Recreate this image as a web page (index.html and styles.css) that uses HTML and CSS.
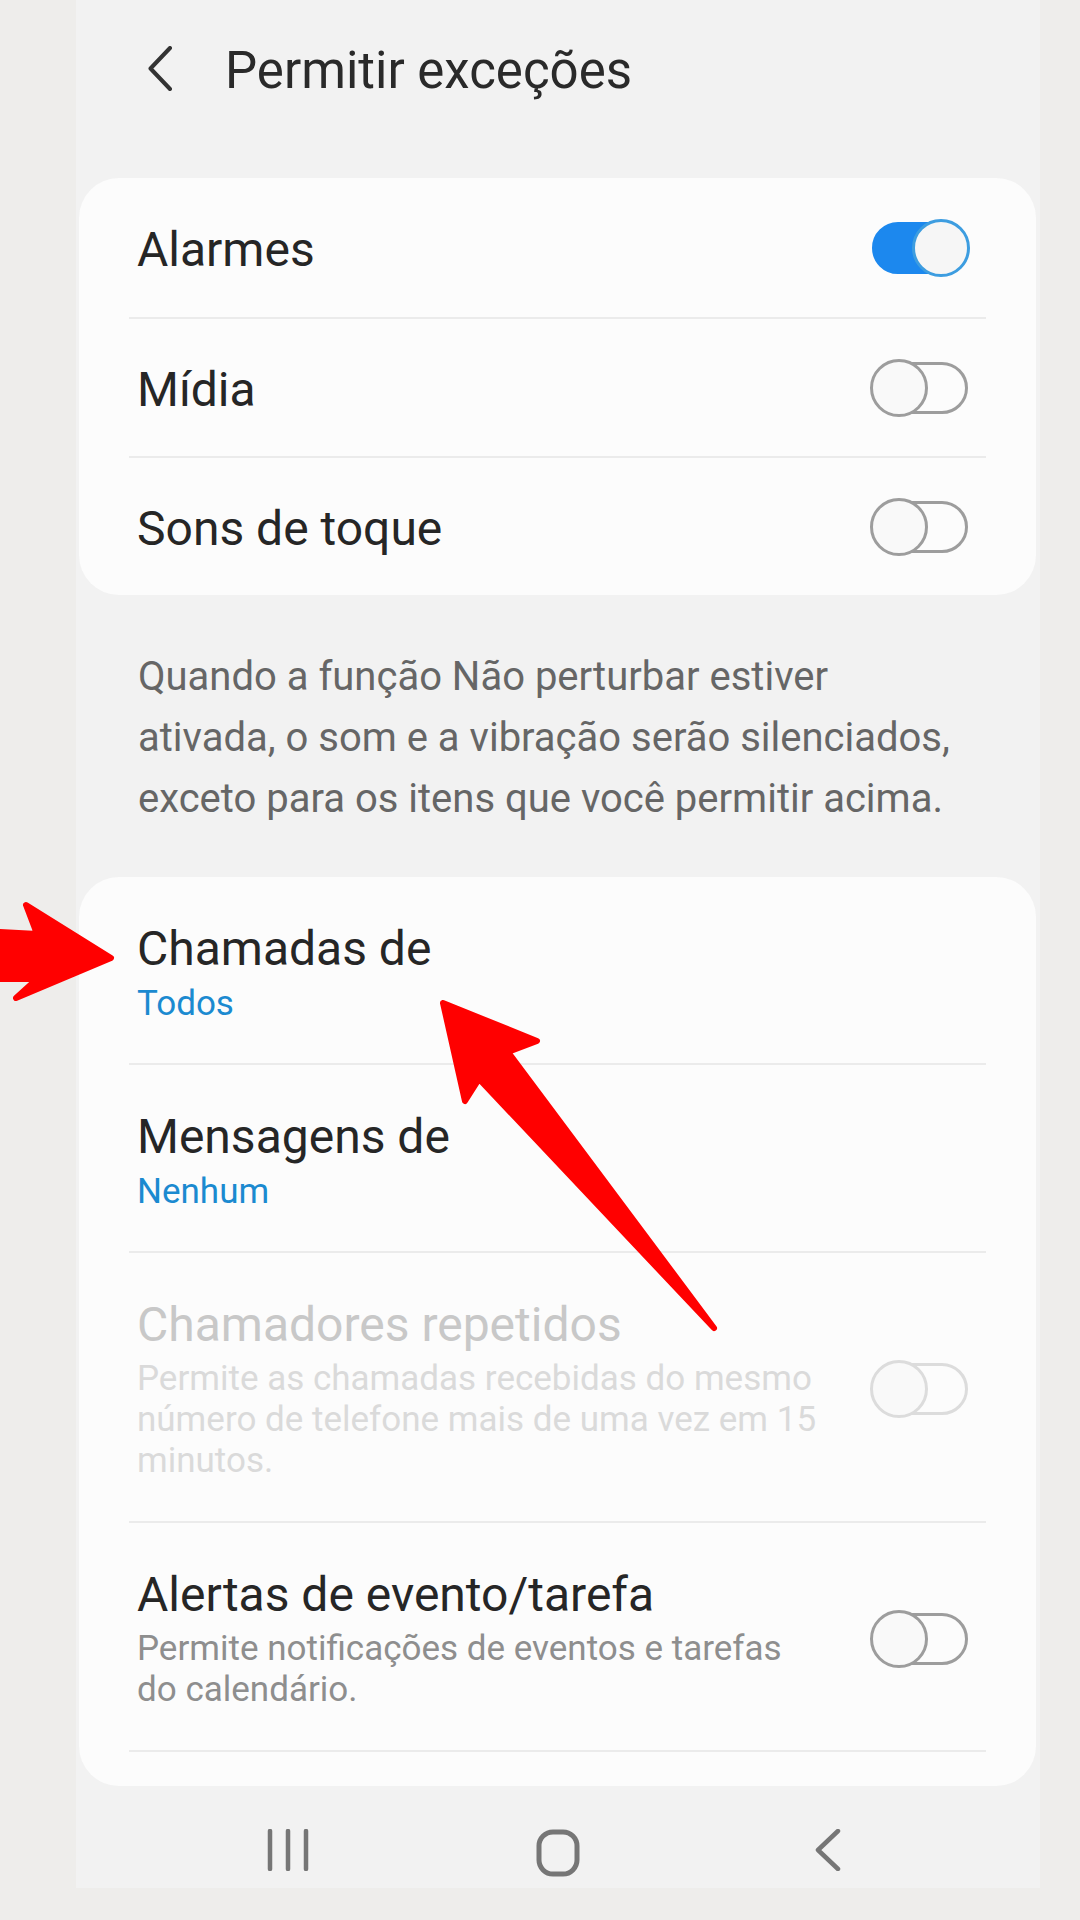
FILE: index.html
```html
<!DOCTYPE html>
<html lang="pt">
<head>
<meta charset="utf-8">
<title>Permitir exceções</title>
<link rel="stylesheet" href="styles.css">
</head>
<body>
<div class="screen">
  <header class="appbar">
    <svg class="back" width="26" height="45" viewBox="0 0 26 45"><path d="M23 2 L3.5 22.5 L23 43" fill="none" stroke="#333" stroke-width="4" stroke-linecap="round" stroke-linejoin="round"/></svg>
    <h1 class="appbar-title">Permitir exceções</h1>
  </header>

  <section class="card">
    <div class="row">
      <span class="label">Alarmes</span>
      <span class="toggle on"><span class="track"></span><span class="thumb"></span></span>
    </div>
    <div class="row">
      <span class="label">Mídia</span>
      <span class="toggle"><span class="track"></span><span class="thumb"></span></span>
    </div>
    <div class="row">
      <span class="label">Sons de toque</span>
      <span class="toggle"><span class="track"></span><span class="thumb"></span></span>
    </div>
  </section>

  <p class="note">Quando a função Não perturbar estiver<br>ativada, o som e a vibração serão silenciados,<br>exceto para os itens que você permitir acima.</p>

  <section class="card list">
    <div class="item">
      <div class="text">
        <div class="title">Chamadas de</div>
        <div class="value">Todos</div>
      </div>
    </div>
    <div class="item">
      <div class="text">
        <div class="title">Mensagens de</div>
        <div class="value">Nenhum</div>
      </div>
    </div>
    <div class="item disabled">
      <div class="text">
        <div class="title">Chamadores repetidos</div>
        <div class="desc">Permite as chamadas recebidas do mesmo<br>número de telefone mais de uma vez em 15<br>minutos.</div>
      </div>
      <span class="toggle"><span class="track"></span><span class="thumb"></span></span>
    </div>
    <div class="item events">
      <div class="text">
        <div class="title">Alertas de evento/tarefa</div>
        <div class="desc">Permite notificações de eventos e tarefas<br>do calendário.</div>
      </div>
      <span class="toggle"><span class="track"></span><span class="thumb"></span></span>
    </div>
    <div class="item tail"></div>
  </section>

  <nav class="navbar">
    <span class="nav-slot">
      <svg width="44" height="42" viewBox="0 0 44 42"><path d="M4 2 V40 M22 2 V40 M40 2 V40" stroke="#767676" stroke-width="4.5" stroke-linecap="round" fill="none"/></svg>
    </span>
    <span class="nav-slot">
      <svg width="44" height="48" viewBox="0 0 44 48"><rect x="3" y="3" width="38" height="42" rx="14" ry="14" fill="none" stroke="#767676" stroke-width="5"/></svg>
    </span>
    <span class="nav-slot">
      <svg width="28" height="42" viewBox="0 0 28 42"><path d="M24 2 L4 21 L24 40" fill="none" stroke="#767676" stroke-width="4.5" stroke-linecap="round" stroke-linejoin="round"/></svg>
    </span>
  </nav>
</div>

<svg class="annotations" width="1080" height="1920" viewBox="0 0 1080 1920">
  <polygon points="0,932 37,934 26,905 111,958 16,998 37,979 0,979" fill="#ff0000" stroke="#ff0000" stroke-width="6" stroke-linejoin="round"/>
  <polygon points="443,1003 537,1041 508,1052 714,1328 479,1079 465,1101" fill="#ff0000" stroke="#ff0000" stroke-width="6" stroke-linejoin="round"/>
</svg>
</body>
</html>
```

FILE: styles.css
```css
* { box-sizing: border-box; }

html, body {
  margin: 0;
  padding: 0;
}

body {
  width: 1080px;
  height: 1920px;
  background: #eeedeb;
  font-family: Roboto, "Noto Sans", "Liberation Sans", sans-serif;
  position: relative;
  overflow: hidden;
}

.screen {
  margin-left: 76px;
  width: 964px;
  height: 1888px;
  background: #f2f2f2;
  display: flex;
  flex-direction: column;
}

/* App bar */
.appbar {
  height: 136px;
  margin-bottom: 42px;
  display: flex;
  align-items: center;
  padding-left: 71px;
  flex: none;
}

.back { flex: none; display: block; }

.appbar-title {
  margin: 5px 0 0 52px;
  font-size: 51px;
  line-height: 1;
  font-weight: 400;
  color: #2a2a2a;
}

/* Cards */
.card {
  margin: 0 4px 0 3px;
  background: #fcfcfc;
  border-radius: 40px;
  padding: 0 50px;
  flex: none;
}

.row {
  height: 139px;
  display: flex;
  align-items: center;
  justify-content: space-between;
  padding: 0 16px 0 8px;
}

.row + .row { border-top: 2px solid #ebebeb; }

.label {
  padding-top: 4px;
  font-size: 48px;
  line-height: 56px;
  color: #262626;
}

/* Note */
.note {
  margin: 0;
  padding: 51px 40px 48px 62px;
  font-size: 40px;
  line-height: 61px;
  color: #666666;
  flex: none;
}

/* List items */
.item {
  display: flex;
  align-items: center;
  justify-content: space-between;
  padding: 44px 16px 37px 8px;
}

.item + .item { border-top: 2px solid #ebebeb; }

.item.disabled { padding-bottom: 40px; }
.item.events { padding-bottom: 40px; }

.item.tail {
  padding: 0;
  height: 36px;
}

.title {
  font-size: 48px;
  line-height: 56px;
  color: #262626;
}

.value {
  margin-top: 5px;
  font-size: 35px;
  line-height: 44px;
  color: #1b8ad0;
}

.desc {
  margin-top: 5px;
  font-size: 35px;
  line-height: 41px;
  color: #8e8e8e;
}

.item.disabled .title { color: #c8c8c8; }
.item.disabled .desc { color: #dadada; }

/* Toggles */
.toggle {
  position: relative;
  width: 100px;
  height: 58px;
  flex: none;
}

.track {
  position: absolute;
  left: 1px;
  top: 3px;
  width: 97px;
  height: 52px;
  border: 3px solid #9d9d9d;
  border-radius: 26px;
}

.thumb {
  position: absolute;
  left: 0;
  top: 0;
  width: 58px;
  height: 58px;
  border: 3px solid #9d9d9d;
  border-radius: 50%;
  background: #f9f9f9;
}

.toggle.on .track {
  left: 2px;
  width: 90px;
  background: #1c88ee;
  border-color: #1c88ee;
}

.toggle.on .thumb {
  left: 42px;
  border-color: #3d9de0;
  background: #f6f6f6;
}

.item.disabled .track,
.item.disabled .thumb { border-color: #dcdcdc; }

/* Navigation bar */
.navbar {
  flex: 1;
  display: flex;
  justify-content: center;
  align-items: flex-start;
  gap: 190px;
  padding-top: 43px;
}

.nav-slot {
  width: 80px;
  display: flex;
  justify-content: center;
}

.nav-slot svg { display: block; }

/* Annotation overlay */
.annotations {
  position: absolute;
  left: 0;
  top: 0;
  pointer-events: none;
}
```
